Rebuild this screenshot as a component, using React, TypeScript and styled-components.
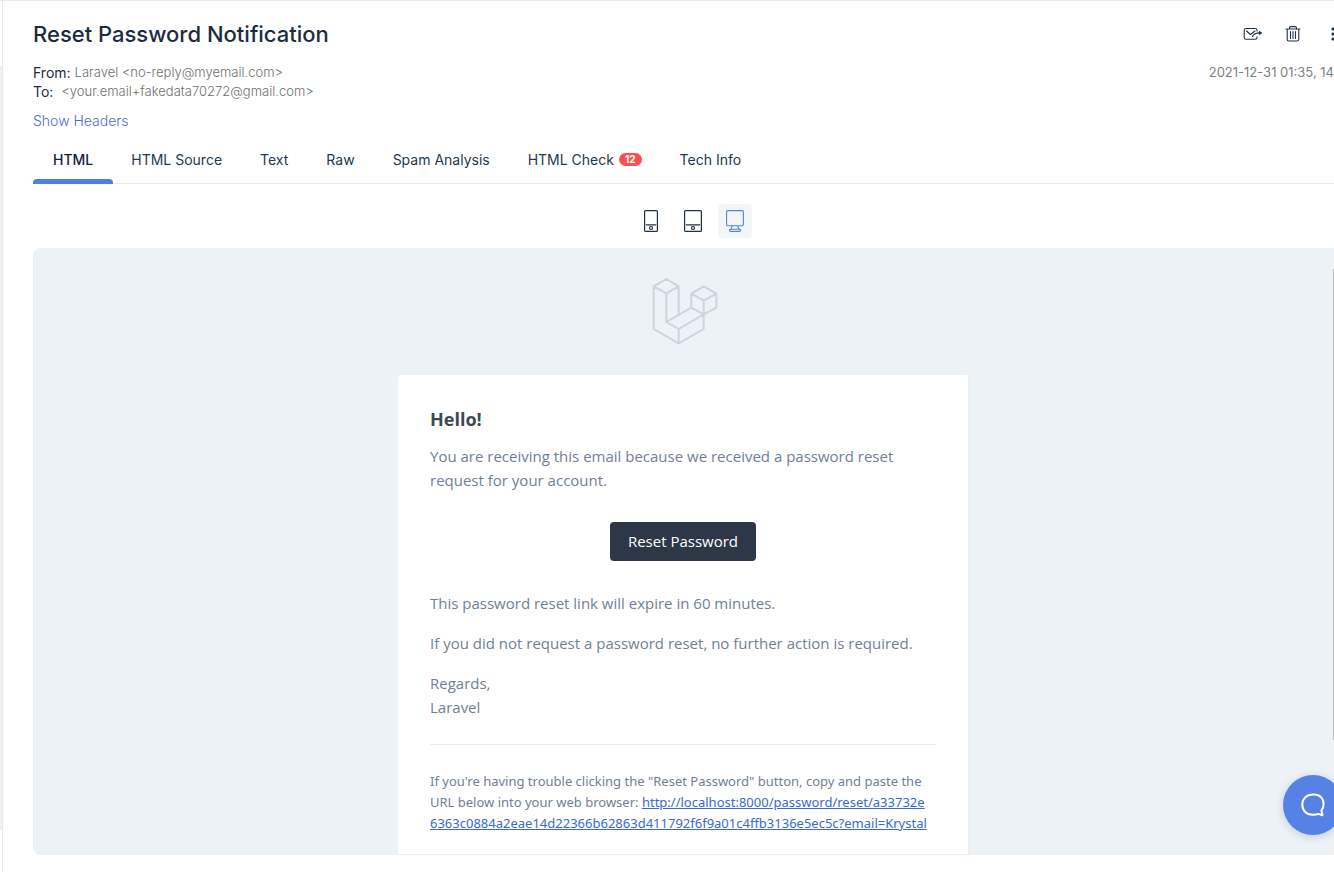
import React from "react";
import styled, { createGlobalStyle } from "styled-components";

const ui = `Inter, "Liberation Sans", sans-serif`;
const mail = `"Open Sans", "Noto Sans", sans-serif`;

const GlobalStyle = createGlobalStyle`
  * { box-sizing: border-box; }
  html, body { margin: 0; padding: 0; background: #fff; }
  body { font-family: ${ui}; overflow: hidden; }
  #root { overflow: hidden; }
  h1, h2, p, dl, dd, dt { margin: 0; }
`;

const Page = styled.div`
  display: flex;
  min-height: 100vh;
  border-top: 1px solid #e9eaeb;
`;

const Rail = styled.aside`
  flex: 0 0 3px;
  padding: 65px 0 42px;
  border-right: 1px solid #e9e9ea;
  display: flex;
`;

const RailTrack = styled.div`
  flex: 1;
  background: #f1f1f1;
`;

const Main = styled.main`
  flex: 1;
  min-width: 0;
  display: flex;
  flex-direction: column;
  padding: 18px 0 17px 30px;
`;

const TopRow = styled.header`
  display: flex;
  justify-content: space-between;
  align-items: center;
  height: 30px;
`;

const Title = styled.h1`
  font-size: 22px;
  line-height: 30px;
  font-weight: 500;
  color: #1d2b3f;
`;

const Actions = styled.div`
  display: flex;
  gap: 20px;
  margin-right: -9px;
`;

const IconButton = styled.button`
  display: flex;
  align-items: center;
  justify-content: center;
  width: 20px;
  height: 20px;
  padding: 0;
  border: 0;
  background: none;
  color: #1f3247;
`;

const MetaRow = styled.div`
  display: flex;
  justify-content: space-between;
  margin-top: 14px;
`;

const Addresses = styled.dl`
  display: flex;
  flex-direction: column;
`;

const Address = styled.div<{ $gap: number }>`
  display: flex;
  gap: ${(p) => p.$gap}px;
  line-height: 19px;
  font-size: 13px;
  color: #6f6f6f;
  dt { font-size: 14px; color: #1d2b3f; }
  dd { font-weight: 300; }
`;

const Received = styled.time`
  font-size: 13px;
  line-height: 19px;
  color: #7f7f7f;
  white-space: nowrap;
`;

const HeadersLink = styled.a`
  align-self: flex-start;
  margin-top: 10px;
  font-size: 14px;
  line-height: 20px;
  font-weight: 300;
  color: #4a6fdc;
  text-decoration: none;
`;

const Tabs = styled.nav`
  display: flex;
  margin-top: 8px;
  border-bottom: 1px solid #e9eaec;
`;

const Tab = styled.button<{ $active?: boolean }>`
  display: flex;
  align-items: center;
  gap: 5px;
  height: 45px;
  margin-bottom: -1px;
  padding: 0 20px 4px;
  position: relative;
  border: 0;
  background: none;
  font-family: ${ui};
  font-size: 14px;
  font-weight: ${(p) => (p.$active ? 500 : 400)};
  color: ${(p) => (p.$active ? "#14213a" : "#24394f")};
  white-space: nowrap;
  & + & {
    margin-left: -2px;
  }
  &::after {
    content: "";
    display: ${(p) => (p.$active ? "block" : "none")};
    position: absolute;
    left: 0;
    right: 0;
    bottom: 0;
    height: 5px;
    border-radius: 4px 4px 0 0;
    background: #4a80e8;
  }
`;

const Count = styled.span`
  padding: 0 6px;
  border-radius: 7px;
  background: #fb5050;
  color: #fff;
  font-size: 10px;
  line-height: 13px;
  font-weight: 700;
`;

const Wide = styled.div`
  flex: 1;
  display: flex;
  flex-direction: column;
  margin-right: -19px;
`;

const Devices = styled.div`
  display: flex;
  justify-content: center;
  gap: 8px;
  padding: 20px 0 10px;
`;

const Device = styled.button<{ $active?: boolean }>`
  display: flex;
  align-items: center;
  justify-content: center;
  width: 34px;
  height: 34px;
  padding: 0;
  border: 0;
  border-radius: 4px;
  background: ${(p) => (p.$active ? "#f2f6f8" : "none")};
  color: ${(p) => (p.$active ? "#5287e0" : "#1f3247")};
`;

const Preview = styled.section`
  flex: 1 1 0;
  min-height: 400px;
  display: flex;
  overflow: hidden;
  border: 1px solid #ebeef2;
  border-radius: 8px;
  background: #edf2f7;
`;

const Message = styled.article`
  flex: 1;
  display: flex;
  flex-direction: column;
  align-items: center;
  font-family: ${mail};
`;

const Scrollbar = styled.div`
  flex: 0 0 20px;
  padding: 20px 0 114px 1px;
  background: #f0f1f3;
  display: flex;
`;

const Thumb = styled.div`
  flex: 1;
  background: #b9babc;
`;

const LogoLink = styled.a`
  display: flex;
  padding: 25px 0 26px;
`;

const Card = styled.div`
  flex: 1 0 auto;
  width: 570px;
  max-width: 100%;
  padding: 32px;
  border-radius: 2px;
  background: #fff;
  box-shadow: 0 2px 0 rgba(0, 0, 150, 0.025), 2px 4px 0 rgba(0, 0, 150, 0.015);
`;

const Greeting = styled.h2`
  font-size: 18px;
  line-height: 25px;
  font-weight: 700;
  color: #3d4852;
  margin-bottom: 12px;
`;

const Para = styled.p`
  font-size: 15px;
  line-height: 24px;
  color: #718096;
  margin-bottom: 16px;
`;

const Action = styled.div`
  display: flex;
  justify-content: center;
  margin: 30px 0;
`;

const ResetLink = styled.a`
  padding: 0 18px;
  border-radius: 4px;
  background: #2d3748;
  color: #fff;
  font-size: 15px;
  line-height: 39px;
  text-decoration: none;
`;

const Subcopy = styled.p`
  margin-top: 25px;
  padding-top: 26px;
  border-top: 1px solid #e8e9ef;
  font-family: "Noto Sans", "Open Sans", sans-serif;
  font-size: 13px;
  line-height: 21px;
  color: #718096;
  white-space: nowrap;
  a { color: #3869d4; }
`;

const Chat = styled.button`
  position: fixed;
  right: -9px;
  bottom: 37px;
  display: flex;
  align-items: center;
  justify-content: center;
  width: 60px;
  height: 60px;
  padding: 0;
  border: 0;
  border-radius: 50%;
  background: #5682e6;
  box-shadow: 0 2px 8px rgba(30, 60, 110, 0.2);
`;

const line = { fill: "none", stroke: "currentColor", strokeLinecap: "round", strokeLinejoin: "round" } as const;

const ForwardIcon = () => (
  <svg width="20" height="16" viewBox="0 0 20 16" {...line} strokeWidth="1.1">
    <path d="M14 5V4.2a1.8 1.8 0 0 0-1.800-1.700H3A1.800 1.800 0 0 0 1.200 4.200v7.200A1.800 1.800 0 0 0 3 13.200h9.200A1.800 1.800 0 0 0 14 11.400v-.7" />
    <path d="M3.500 5l4 3.500L12 5M9.500 10.500c1.200-2.600 3-3.600 7.500-3.600" />
    <path d="M16.500 5.600l2 1.300-2 1.300z" fill="currentColor" />
  </svg>
);

const TrashIcon = () => (
  <svg width="16" height="18" viewBox="0 0 16 18" {...line} strokeWidth="1.1">
    <path d="M1 4h14M2.200 4v10.200a1.800 1.800 0 0 0 1.800 1.800h8a1.800 1.800 0 0 0 1.800-1.800V4M4.500 3.800V3a1.400 1.400 0 0 1 1.400-1.400h4.200A1.400 1.400 0 0 1 11.500 3v.8M5.500 6.500v7M8 6.500v7M10.500 6.500v7" />
  </svg>
);

const MoreIcon = () => (
  <svg width="4" height="14" viewBox="0 0 4 14" fill="currentColor">
    <circle cx="2" cy="2" r="1.600" />
    <circle cx="2" cy="7" r="1.600" />
    <circle cx="2" cy="12" r="1.600" />
  </svg>
);

const HandheldIcon = ({ width }: { width: number }) => (
  <svg width={width} height="22" viewBox={`0 0 ${width} 22`} {...line} strokeWidth="1.2">
    <rect x=".6" y=".6" width={width - 1.2} height="20.800" rx="1" />
    <path d={`M2.200 14.800h${width - 4.4}`} />
    <circle cx={width / 2} cy="18" r="1.500" />
  </svg>
);

const DesktopIcon = () => (
  <svg width="18" height="22" viewBox="0 0 18 22" {...line} strokeWidth="1.100">
    <rect x=".6" y=".6" width="16.800" height="15.200" rx="1.200" />
    <path d="M6 16c0 1.500-.4 2.500-1.200 3.200M12 16c0 1.500.4 2.500 1.200 3.200" />
    <rect x="3.500" y="19.200" width="11" height="2.200" rx=".8" />
  </svg>
);

const LaravelLogo = () => (
  <svg width="75" height="75" viewBox="50 27 225 225" fill="none" stroke="#cbd5e0" strokeWidth="6" strokeLinejoin="round" strokeLinecap="round" role="img" aria-label="Laravel">
    <path d="M73 64l38-22 37 22-37 21zM73 64v128l75 43 75-43v-44M111 85v86l37 21v43M148 64v85M111 171l75-43 37 20-75 44M186 86l37-22 38 22-38 21zM186 86v42M261 86v42l-38 20v-41" />
  </svg>
);

const ChatIcon = () => (
  <svg width="26" height="26" viewBox="0 0 26 26" fill="none" stroke="#fff" strokeWidth="2" strokeLinejoin="round">
    <path d="M13 2.600h1c5.800 0 9.600 3.700 9.600 9.300 0 2.800-.8 5-2.200 6.600l1.100 4.700-4.300-1.300c-1.400.6-3 .8-4.700.8h-1C6 22.700 2.300 18.300 2.300 12.500S6.500 2.600 13 2.600z" />
  </svg>
);

const tabs: { label: string; count?: number }[] = [
  { label: "HTML" },
  { label: "HTML Source" },
  { label: "Text" },
  { label: "Raw" },
  { label: "Spam Analysis" },
  { label: "HTML Check", count: 12 },
  { label: "Tech Info" },
];

export default function App() {
  return (
    <>
      <GlobalStyle />
      <Page>
        <Rail><RailTrack /></Rail>
        <Main>
          <TopRow>
            <Title>Reset Password Notification</Title>
            <Actions>
              <IconButton aria-label="Forward"><ForwardIcon /></IconButton>
              <IconButton aria-label="Delete"><TrashIcon /></IconButton>
              <IconButton aria-label="More"><MoreIcon /></IconButton>
            </Actions>
          </TopRow>
          <MetaRow>
            <Addresses>
              <Address $gap={4}><dt>From:</dt><dd>Laravel &lt;no-reply@myemail.com&gt;</dd></Address>
              <Address $gap={8}><dt>To:</dt><dd>&lt;your.email+fakedata70272@gmail.com&gt;</dd></Address>
            </Addresses>
            <Received>2021-12-31 01:35, 14</Received>
          </MetaRow>
          <HeadersLink href="#headers">Show Headers</HeadersLink>
          <Tabs>
            {tabs.map((t, i) => (
              <Tab key={t.label} $active={i === 0}>
                {t.label}
                {t.count && <Count>{t.count}</Count>}
              </Tab>
            ))}
          </Tabs>
          <Wide>
            <Devices>
              <Device aria-label="Phone"><HandheldIcon width={14} /></Device>
              <Device aria-label="Tablet"><HandheldIcon width={18} /></Device>
              <Device aria-label="Desktop" $active><DesktopIcon /></Device>
            </Devices>
            <Preview>
              <Message>
                <LogoLink href="#laravel"><LaravelLogo /></LogoLink>
                <Card>
                  <Greeting>Hello!</Greeting>
                  <Para>You are receiving this email because we received a password reset request for your account.</Para>
                  <Action><ResetLink href="#reset">Reset Password</ResetLink></Action>
                  <Para>This password reset link will expire in 60 minutes.</Para>
                  <Para>If you did not request a password reset, no further action is required.</Para>
                  <Para>Regards,<br />Laravel</Para>
                  <Subcopy>
                    If you're having trouble clicking the "Reset Password" button, copy and paste the<br />
                    URL below into your web browser:{" "}
                    <a href="#reset-url">
                      http://localhost:8000/password/reset/a33732e<br />
                      6363c0884a2eae14d22366b62863d411792f6f9a01c4ffb3136e5ec5c?email=Krystal
                    </a>
                  </Subcopy>
                </Card>
              </Message>
              <Scrollbar><Thumb /></Scrollbar>
            </Preview>
          </Wide>
        </Main>
      </Page>
      <Chat aria-label="Open chat"><ChatIcon /></Chat>
    </>
  );
}
